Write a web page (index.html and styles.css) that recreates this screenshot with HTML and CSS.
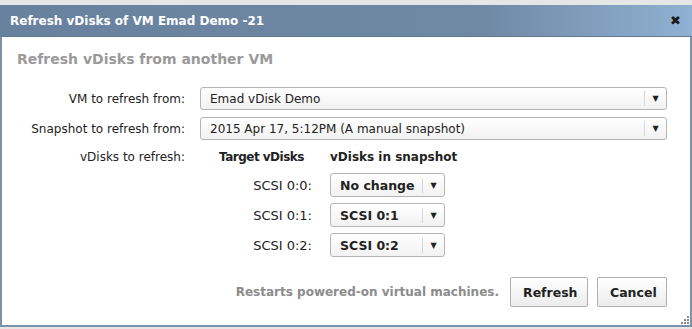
FILE: index.html
```html
<!DOCTYPE html>
<html lang="en">
  <head>
    <meta charset="UTF-8" />
    <title>Refresh vDisks</title>
    <link rel="stylesheet" href="styles.css">
  </head>
  <body>
    <div class="dialog">
      <div class="titlebar">
        <span class="title">Refresh vDisks of VM Emad Demo -21</span>
        <span class="close">&#x2716;</span>
      </div>
      <div class="content">
        <h2 class="heading">Refresh vDisks from another VM</h2>

        <div class="form">
          <div class="row">
            <span class="label">VM to refresh from:</span>
            <div class="select wide">
              <span class="value">Emad vDisk Demo</span>
              <span class="arrow">&#9660;</span>
            </div>
          </div>
          <div class="row">
            <span class="label">Snapshot to refresh from:</span>
            <div class="select wide">
              <span class="value">2015 Apr 17, 5:12PM (A manual snapshot)</span>
              <span class="arrow">&#9660;</span>
            </div>
          </div>
          <div class="row head">
            <span class="label">vDisks to refresh:</span>
            <span class="col-target">Target vDisks</span>
            <span class="col-snap">vDisks in snapshot</span>
          </div>

          <div class="disk">
            <span class="disk-label">SCSI 0:0:</span>
            <div class="select small">
              <span class="value bold">No change</span>
              <span class="arrow">&#9660;</span>
            </div>
          </div>
          <div class="disk">
            <span class="disk-label">SCSI 0:1:</span>
            <div class="select small">
              <span class="value bold">SCSI 0:1</span>
              <span class="arrow">&#9660;</span>
            </div>
          </div>
          <div class="disk">
            <span class="disk-label">SCSI 0:2:</span>
            <div class="select small">
              <span class="value bold">SCSI 0:2</span>
              <span class="arrow">&#9660;</span>
            </div>
          </div>
        </div>

        <div class="footer">
          <span class="note">Restarts powered-on virtual machines.</span>
          <button class="btn refresh">Refresh</button>
          <button class="btn cancel">Cancel</button>
        </div>
      </div>
      <div class="grip">
        <svg width="8" height="8" viewBox="0 0 8 8">
          <rect x="6" y="0" width="2" height="2" fill="#8a8a8a" />
          <rect x="3" y="3" width="2" height="2" fill="#8a8a8a" />
          <rect x="6" y="3" width="2" height="2" fill="#8a8a8a" />
          <rect x="0" y="6" width="2" height="2" fill="#8a8a8a" />
          <rect x="3" y="6" width="2" height="2" fill="#8a8a8a" />
          <rect x="6" y="6" width="2" height="2" fill="#8a8a8a" />
        </svg>
      </div>
    </div>
  </body>
</html>
```

FILE: styles.css
```css
body {
  margin: 0;
  padding: 0;
  background: #e6e6e6;
  font-family: "DejaVu Sans", Verdana, sans-serif;
  font-size: 12px;
  color: #222;
}
.dialog {
  margin-top: 5px;
  height: 322px;
  background: white;
  border: 2px solid #7b92ab;
  border-top: none;
  box-sizing: border-box;
  position: relative;
}
.titlebar {
  height: 31px;
  margin: 0 -2px;
  padding: 0 11px 0 10px;
  display: flex;
  align-items: center;
  justify-content: space-between;
  background: linear-gradient(to right, #67819e, #6f89a5 70%, #90b1d2);
  border-bottom: 1px solid #5f7894;
}
.title {
  color: white;
  font-weight: bold;
  font-size: 12px;
}
.close {
  color: #1a1a1a;
  font-size: 13px;
  font-weight: bold;
}
.content {
  padding: 0 23px 0 15px;
}
.heading {
  margin: 14px 0 0;
  font-size: 14px;
  color: #9a9a9a;
  font-weight: bold;
}
.form {
  margin-top: 20px;
}
.row {
  display: flex;
  align-items: center;
  margin-bottom: 7px;
}
.label {
  width: 168px;
  text-align: right;
  margin-right: 15px;
  flex-shrink: 0;
}
.select {
  height: 23px;
  box-sizing: border-box;
  border: 1px solid #b5b5b5;
  border-radius: 3px;
  background: linear-gradient(to bottom, #ffffff, #f2f2f2);
  display: flex;
  align-items: center;
}
.select .value {
  flex: 1;
  padding-left: 9px;
}
.select .value.bold {
  font-weight: bold;
}
.select .arrow {
  width: 21px;
  border-left: 1px solid #d6d6d6;
  height: 15px;
  line-height: 15px;
  text-align: center;
  font-size: 8px;
  color: #222;
}
.wide {
  width: 467px;
}
.head {
  margin-top: 10px;
  margin-bottom: 9px;
}
.col-target {
  font-weight: bold;
  margin-left: 19px;
  width: 111px;
  letter-spacing: -0.5px;
}
.col-snap {
  font-weight: bold;
}
.disk {
  display: flex;
  align-items: center;
  margin-top: 6px;
}
.disk:first-of-type {
  margin-top: 0;
}
.disk-label {
  width: 295px;
  text-align: right;
  margin-right: 18px;
  font-size: 13px;
}
.small {
  width: 115px;
  height: 24px;
}
.small .value {
  font-size: 12.5px;
}
.footer {
  display: flex;
  align-items: center;
  justify-content: flex-end;
  margin-top: 20px;
}
.note {
  color: #8c8c8c;
  font-weight: bold;
  margin-right: 11px;
}
.btn {
  font-family: "DejaVu Sans", Verdana, sans-serif;
  font-weight: bold;
  font-size: 12.5px;
  color: #222;
  height: 30px;
  border: 1px solid #b0b0b0;
  border-radius: 2px;
  background: linear-gradient(to bottom, #ffffff, #ececec);
  padding: 0 12px;
}
.refresh {
  width: 78px;
  margin-right: 9px;
}
.cancel {
  width: 70px;
}
.grip {
  position: absolute;
  right: 1px;
  bottom: 1px;
  line-height: 0;
}
```
